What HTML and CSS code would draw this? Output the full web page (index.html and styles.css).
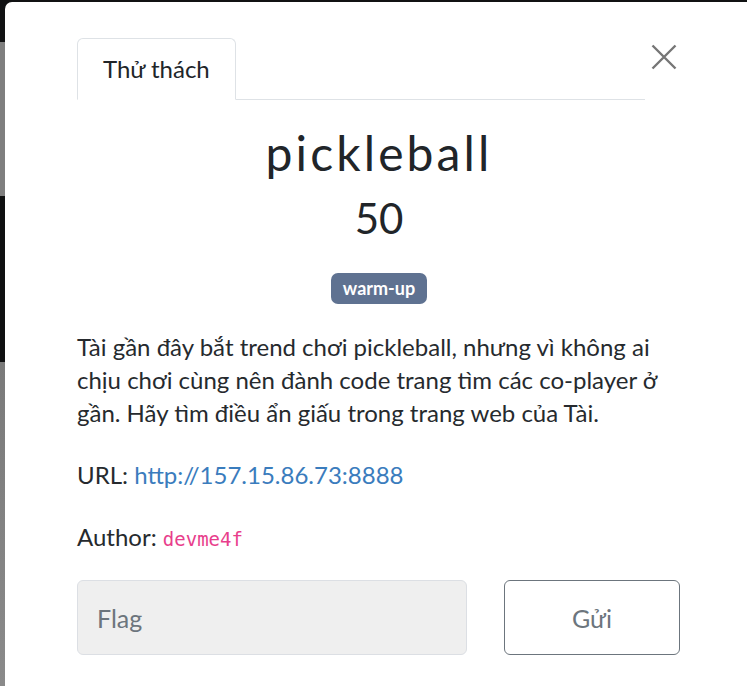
FILE: index.html
```html
<!DOCTYPE html>
<html lang="vi">
<head>
<meta charset="utf-8">
<title>pickleball</title>
<link rel="stylesheet" href="styles.css">
</head>
<body>
<div class="modal">
  <div class="header">
    <ul class="tabs">
      <li class="tab">Thử thách</li>
    </ul>
    <button class="close" aria-label="Close">
      <svg width="26" height="26" viewBox="0 0 26 26"><path d="M1.5 1.5L24.5 24.5M24.5 1.5L1.5 24.5" stroke="#767676" stroke-width="2.4" fill="none"/></svg>
    </button>
  </div>
  <div class="content">
    <div class="head">
      <h2 class="title">pickleball</h2>
      <h3 class="value">50</h3>
      <div class="tags"><span class="badge">warm-up</span></div>
    </div>
    <p class="desc">Tài gần đây bắt trend chơi pickleball, nhưng vì không ai chịu chơi cùng nên đành code trang tìm các co-player ở gần. Hãy tìm điều ẩn giấu trong trang web của Tài.</p>
    <p class="desc">URL: <a class="link" href="#">http://157.15.86.73:8888</a></p>
    <p class="desc">Author: <code class="code">devme4f</code></p>
    <div class="submit-row">
      <input class="flag" type="text" placeholder="Flag">
      <button class="send">Gửi</button>
    </div>
  </div>
</div>
</body>
</html>
```
FILE: styles.css
```css
html, body {
  margin: 0;
  padding: 0;
  height: 100%;
  overflow: hidden;
}
body {
  font-family: Lato, "Noto Sans", sans-serif;
  color: #212529;
  background: linear-gradient(to bottom, #111213 0, #111213 42px, #7f7f7f 42px, #7f7f7f 196px, #0f1011 196px, #0f1011 362px, #7a7a7a 362px, #8a8a8a 686px);
}
.modal {
  margin: 2px 0 0 5px;
  width: 760px;
  height: 700px;
  background: #fff;
  border-radius: 7px;
  box-sizing: border-box;
  padding: 36px 0 0 72px;
}
.header {
  display: flex;
  align-items: flex-start;
}
.tabs {
  list-style: none;
  margin: 0;
  padding: 0;
  width: 568px;
  border-bottom: 1px solid #dee2e6;
  display: flex;
}
.tab {
  margin-bottom: -1px;
  padding: 15px 25px 16px;
  font-size: 24px;
  line-height: 29px;
  border: 1px solid #dee2e6;
  border-bottom-color: #fff;
  border-radius: 6px 6px 0 0;
  background: #fff;
  color: #212529;
}
.close {
  margin: 6px 0 0 6px;
  padding: 0;
  border: 0;
  background: none;
  width: 26px;
  height: 26px;
  display: block;
}
.close svg { display: block; }
.content {
  width: 630px;
}
.head {
  width: 604px;
  text-align: center;
}
.title {
  margin: 23px 0 0;
  font-size: 48px;
  line-height: 60px;
  font-weight: 400;
  letter-spacing: 3.1px;
}
.value {
  margin: 8px 0 0;
  font-size: 42px;
  line-height: 54px;
  font-weight: 400;
}
.tags {
  display: flex;
  justify-content: center;
  margin-top: 28px;
}
.badge {
  display: block;
  background: #5f7291;
  color: #fff;
  font-weight: 700;
  font-size: 18px;
  line-height: 21px;
  padding: 5px 12px;
  border-radius: 7px;
}
.desc {
  max-width: 600px;
  margin: 26px 0 29px;
  font-size: 24px;
  line-height: 33px;
  color: #262a2e;
}
.desc + .desc { margin-top: 0; }
.link {
  color: #3a7cbd;
  text-decoration: none;
}
.code {
  font-family: "DejaVu Sans Mono", "Liberation Mono", monospace;
  font-size: 19px;
  color: #e83e8c;
}
.submit-row {
  display: grid;
  grid-template-columns: 390px 176px;
  column-gap: 37px;
  margin-top: -5px;
}
.flag {
  box-sizing: border-box;
  height: 75px;
  margin: 0;
  padding: 0 19px;
  font-family: Lato, "Noto Sans", sans-serif;
  font-size: 25px;
  background: #efefef;
  border: 1px solid #dcdfe4;
  border-radius: 6px;
  color: #495057;
}
.flag::placeholder { color: #6c757d; opacity: 1; }
.send {
  box-sizing: border-box;
  height: 75px;
  margin: 0;
  font-family: Lato, "Noto Sans", sans-serif;
  font-size: 25px;
  background: #fff;
  color: #6c757d;
  border: 1px solid #6c757d;
  border-radius: 6px;
}
```
